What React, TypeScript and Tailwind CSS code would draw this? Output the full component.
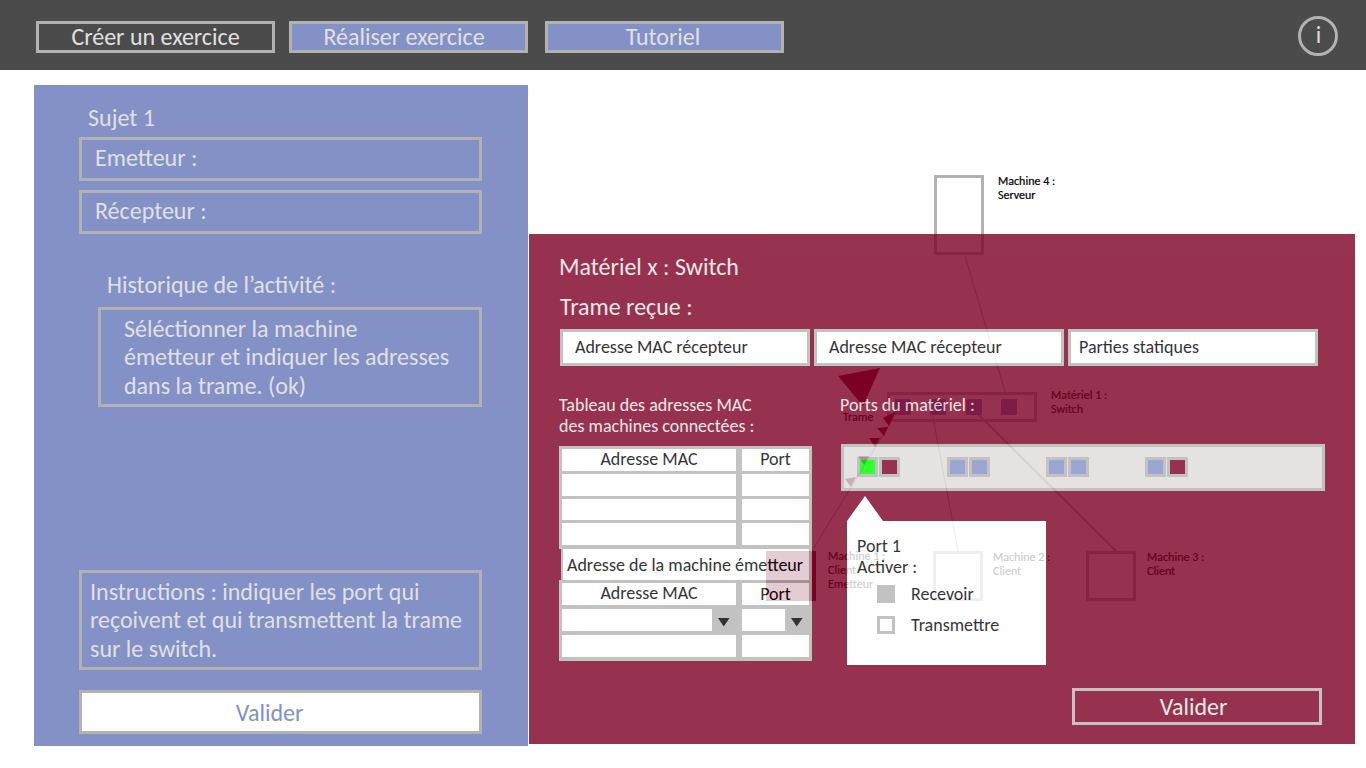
import type { ReactNode } from 'react';

const FONT = "font-['Carlito','Calibri','Lato',sans-serif]";

function NavButton({ className, children }: { className: string; children: ReactNode }) {
  return (
    <button
      className={`flex h-8 w-[239px] items-start justify-center border-3 border-[#b2b2b2] text-2xl/[26px] whitespace-nowrap text-[#e0e0e0] ${className}`}
    >
      {children}
    </button>
  );
}

function Label({ className, lines }: { className: string; lines: string[] }) {
  return (
    <div className={`absolute text-xs/[14px] whitespace-nowrap text-black [-webkit-text-stroke:0.2px_#000] ${className}`}>
      {lines.map((line) => (
        <div key={line}>{line}</div>
      ))}
    </div>
  );
}

function Diagram() {
  return (
    <div className="absolute inset-0">
      <svg className="absolute inset-0 h-full w-full" viewBox="0 70 1366 698" fill="none">
        <g stroke="#b2b2b2">
          <path d="M965 256L1006 395" strokeWidth="1.1" />
          <path d="M897 412L812 551" strokeWidth="1.1" />
          <path d="M933 417L958 551" strokeWidth="1.1" />
          <path d="M978 414L1116 551" strokeWidth="2" />
          <rect x="935.5" y="176.5" width="47" height="77" strokeWidth="3" />
          <rect x="888.5" y="393.5" width="147" height="27" strokeWidth="3" />
          <rect x="934.5" y="552.5" width="47" height="47" strokeWidth="3" />
          <rect x="1087.5" y="552.5" width="47" height="47" strokeWidth="3" />
        </g>
        <g fill="#8391c7">
          <rect x="895" y="399" width="16" height="16" />
          <rect x="930" y="399" width="16" height="16" />
          <rect x="966" y="399" width="16" height="16" />
          <rect x="1001" y="399" width="16" height="16" />
        </g>
        <g fill="#7c0024">
          <rect x="766" y="551" width="50" height="50" />
          <path d="M838 376L880 368L863 406Z" />
          <path d="M883 418L896 411L889 426Z" />
          <path d="M877 428L888 427L884 436Z" />
          <path d="M869 438L880 438L875 447Z" />
          <path d="M858 456L869 456L864 465Z" />
          <path d="M845 479L856 477L851 487Z" />
        </g>
      </svg>
      <Label className="top-[104px] left-[998px]" lines={['Machine 4 :', 'Serveur']} />
      <Label className="top-[318px] left-[1051px]" lines={['Matériel 1 :', 'Switch']} />
      <Label className="top-[340px] left-[843px]" lines={['Trame']} />
      <Label className="top-[479px] left-[828px]" lines={['Machine 1 :', 'Client', 'Emetteur']} />
      <Label className="top-[480px] left-[993px]" lines={['Machine 2 :', 'Client']} />
      <Label className="top-[480px] left-[1147px]" lines={['Machine 3 :', 'Client']} />
    </div>
  );
}

function Exercise() {
  const box = 'border-3 border-[#b2b2b2]';
  return (
    <section className="mt-[15px] ml-[34px] flex h-[661px] w-[494px] flex-col bg-[#8391c7] pt-[19px] pr-[46px] pb-3 pl-[45px] text-2xl/[28px] text-[#e0e0e0]">
      <h2 className="pl-[9px]">Sujet 1</h2>
      <div className={`mt-[5px] h-11 pt-1 pl-[13px] ${box}`}>Emetteur :</div>
      <div className={`mt-[9px] h-11 pt-1 pl-[13px] ${box}`}>Récepteur :</div>
      <h3 className="mt-[37px] pl-7">Historique de l’activité :</h3>
      <div className={`mt-2 ml-[19px] h-[100px] pt-[5px] pl-[23px] leading-[28.4px] whitespace-nowrap ${box}`}>
        Séléctionner la machine
        <br />
        émetteur et indiquer les adresses
        <br />
        dans la trame. (ok)
      </div>
      <div className={`mt-auto h-[100px] pt-[5px] pl-2 leading-[28.4px] whitespace-nowrap ${box}`}>
        Instructions : indiquer les port qui
        <br />
        reçoivent et qui transmettent la trame
        <br />
        sur le switch.
      </div>
      <button className={`mt-5 flex h-11 shrink-0 justify-center bg-white pt-[6px] pr-[22px] text-[#8391c7] ${box}`}>
        Valider
      </button>
    </section>
  );
}

function Field({ className, children }: { className: string; children: ReactNode }) {
  return (
    <div className={`h-[37px] w-[250px] border-3 border-[#b3b3b3] bg-white pt-[5px] text-lg/[21px] text-black ${className}`}>
      {children}
    </div>
  );
}

function Cell({ children }: { children?: ReactNode }) {
  return <div className="flex justify-center bg-white leading-[20px]">{children}</div>;
}

function SelectCell() {
  return (
    <div className="flex">
      <div className="flex-1 bg-white" />
      <svg className="h-[22px] w-6" viewBox="0 0 24 22">
        <path d="M6 9H17.500L11.750 17.500Z" fill="#000" />
      </svg>
    </div>
  );
}

function AddressTable() {
  const columns = 'grid grid-cols-[174px_67px] gap-x-[6px] bg-[#b3b3b3] px-[3px]';
  return (
    <div className="mt-[9px] w-[253px] text-lg/[21px] text-black">
      <div className={`h-[103px] grid-rows-[22px_22px_21px_22px] content-start gap-y-[3px] pt-[3px] ${columns}`}>
        <Cell>Adresse MAC</Cell>
        <Cell>Port</Cell>
        <Cell />
        <Cell />
        <Cell />
        <Cell />
        <Cell />
        <Cell />
      </div>
      <div className="ml-[2px] h-[31px] border-r-3 border-l-2 border-[#b3b3b3] bg-white pt-[6px] pl-1 whitespace-nowrap">
        Adresse de la machine émetteur
      </div>
      <div className={`h-[81px] grid-rows-[22px_22px_22px] content-start gap-y-1 pt-[3px] ${columns}`}>
        <Cell>Adresse MAC</Cell>
        <Cell>
          <span className="pt-px">Port</span>
        </Cell>
        <SelectCell />
        <SelectCell />
        <Cell />
        <Cell />
      </div>
    </div>
  );
}

function Port({ className }: { className: string }) {
  return <div className={`h-5 w-[21px] border-3 border-[#b3b3b3] ${className}`} />;
}

function PortPair({ left, right }: { left: string; right: string }) {
  return (
    <div className="flex gap-px">
      <Port className={left} />
      <Port className={right} />
    </div>
  );
}

function PortPopup() {
  return (
    <div className="absolute top-[262px] left-[318px] w-[199px] text-lg/[21px] text-black">
      <svg className="block h-[25px] w-9" viewBox="0 0 36 25">
        <path d="M18 0L36 25H0Z" fill="#fff" />
      </svg>
      <div className="h-36 bg-white pt-[15px] pl-[10px]">
        <div>Port 1</div>
        <div>Activer :</div>
        <div className="mt-[6px] flex gap-4 pl-5">
          <div className="mt-px h-[18px] w-[18px] bg-[#b3b3b3]" />
          <div>Recevoir</div>
        </div>
        <div className="mt-[10px] flex gap-4 pl-5">
          <div className="mt-px h-[18px] w-[18px] border-3 border-[#b3b3b3]" />
          <div>Transmettre</div>
        </div>
      </div>
    </div>
  );
}

function SwitchDialog() {
  return (
    <section className="absolute top-[164px] left-[529px] flex h-[510px] w-[826px] flex-col bg-[#7c0024] pt-[19px] pl-[30px] text-[#e0e0e0] opacity-80">
      <h2 className="text-2xl/[28px]">Matériel x : Switch</h2>
      <h3 className="mt-3 pl-px text-2xl/[28px]">Trame reçue :</h3>
      <div className="mt-2 ml-px flex gap-1">
        <Field className="pl-3">Adresse MAC récepteur</Field>
        <Field className="pl-3">Adresse MAC récepteur</Field>
        <Field className="pl-2">Parties statiques</Field>
      </div>
      <div className="flex items-start pt-[29px]">
        <div className="w-[281px] text-lg/[21px]">
          <p className="whitespace-nowrap">
            Tableau des adresses MAC
            <br />
            des machines connectées :
          </p>
          <AddressTable />
        </div>
        <div>
          <p className="text-lg/[21px]">Ports du matériel :</p>
          <div className="mt-[28px] ml-px flex h-[47px] w-[484px] border-3 border-[#b3b3b3] bg-[#dfdcdb] pt-[10px] pl-[13px]">
            <PortPair left="bg-[#00ff00]" right="bg-[#7c0024]" />
            <div className="w-[47px]" />
            <PortPair left="bg-[#8391c7]" right="bg-[#8391c7]" />
            <div className="w-14" />
            <PortPair left="bg-[#8391c7]" right="bg-[#8391c7]" />
            <div className="w-14" />
            <PortPair left="bg-[#8391c7]" right="bg-[#7c0024]" />
          </div>
        </div>
      </div>
      <button className="mt-auto mr-[33px] mb-[19px] flex h-[37px] w-[250px] shrink-0 justify-center self-end border-3 border-[#b8b2b4] pt-[2px] pr-[7px] text-2xl/[28px]">
        Valider
      </button>
      <PortPopup />
    </section>
  );
}

export default function App() {
  return (
    <div className={`h-[768px] w-[1366px] overflow-hidden bg-white ${FONT}`}>
      <header className="flex h-[70px] items-start bg-[#4b4b4b] pt-[21px] pl-9">
        <NavButton className="bg-transparent">Créer un exercice</NavButton>
        <NavButton className="ml-[14px] bg-[#8391c7] pr-[9px]">Réaliser exercice</NavButton>
        <NavButton className="ml-[17px] bg-[#8391c7] pr-[3px]">Tutoriel</NavButton>
        <button className="-mt-[5px] mr-7 ml-auto flex h-10 w-10 justify-center rounded-full border-3 border-[#b2b2b2] pt-[2px] pl-px text-2xl/[28px] text-[#dcdcdc]">
          i
        </button>
      </header>
      <main className="relative flow-root h-[698px]">
        <Diagram />
        <Exercise />
        <SwitchDialog />
      </main>
    </div>
  );
}
